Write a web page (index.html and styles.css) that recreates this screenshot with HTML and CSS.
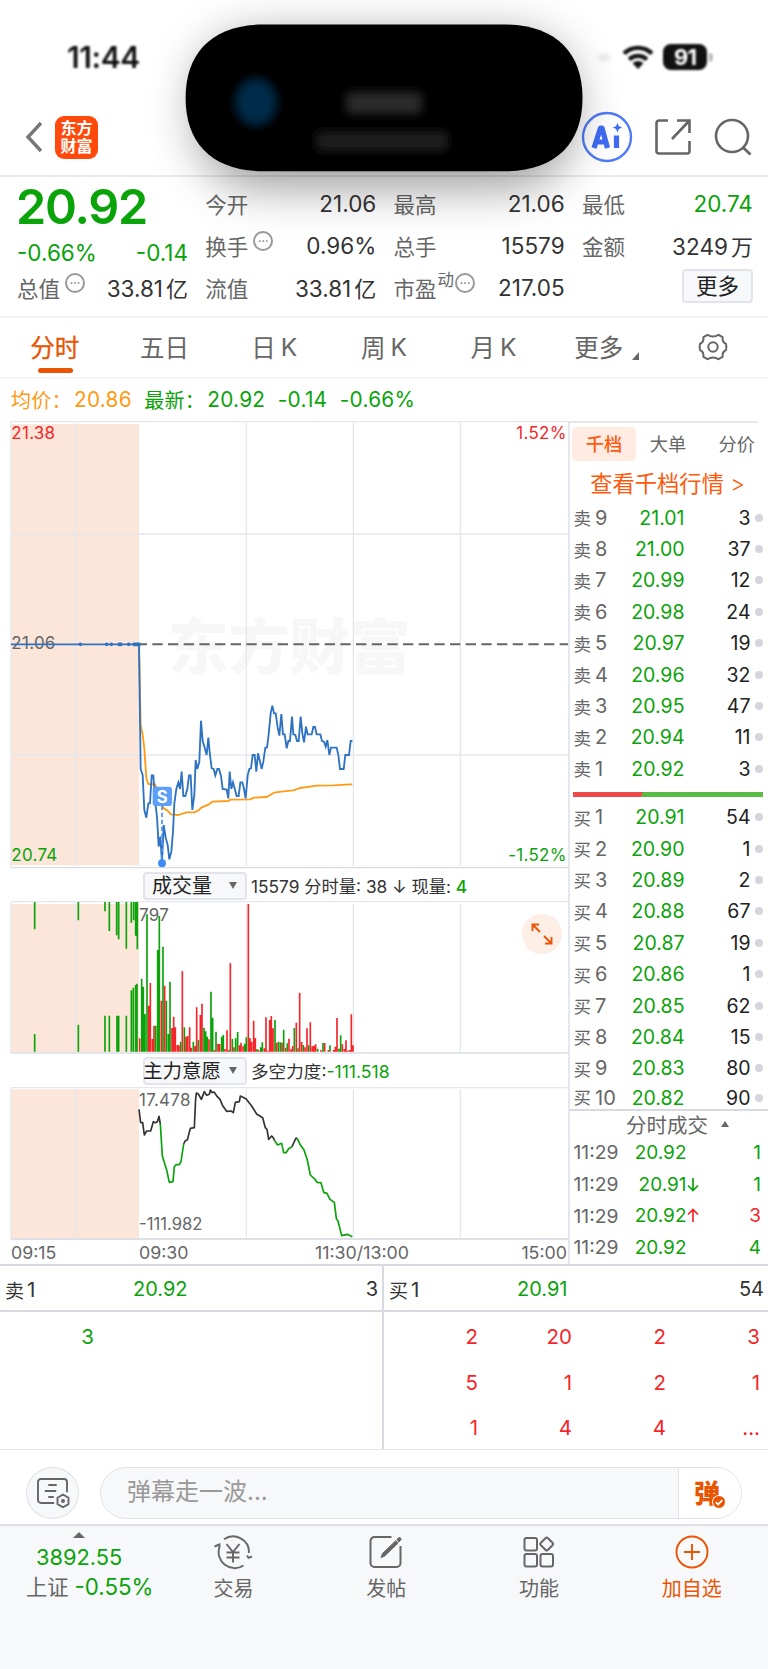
FILE: index.html
```html
<!DOCTYPE html>
<html lang="zh-CN">
<head>
<meta charset="utf-8">
<title>分时行情</title>
<link rel="stylesheet" href="styles.css">
</head>
<body>
<div class="phone">
  <header class="top">
    <div class="status">
      <span class="clock">11:44</span>
      <span class="status-icons">
        <i class="signal"></i>
        <svg class="wifi" width="32" height="25" viewBox="0 0 32 25"><g fill="none" stroke="#111" stroke-width="4.2"><path d="M2 8.6a20 20 0 0 1 28 0"/><path d="M7.2 14.4a12.6 12.6 0 0 1 17.6 0"/></g><path d="M10.6 18.2a7.6 7.6 0 0 1 10.8 0L16 24z" fill="#111"/></svg>
        <span class="battery">91</span><i class="tip"></i>
      </span>
    </div>
    <div class="nav">
      <svg class="back" width="20" height="32" viewBox="0 0 20 32"><path d="M17 2 4 16l13 14" fill="none" stroke="#777" stroke-width="3.400"/></svg>
      <span class="logo"><b>东方</b><b>财富</b></span>
      <span class="grow"></span>
      <svg class="ai" width="52" height="52" viewBox="0 0 52 52"><circle cx="26" cy="26" r="24" fill="#fff" stroke="#4f7af7" stroke-width="2.4"/><g fill="none" stroke="#3f6cf3" stroke-width="5.2" stroke-linejoin="round"><path d="M13 37 19.500 17h1.500L26.500 37M15 31h11"/><path d="M35.500 24.500V37"/></g><path d="M36.500 12l1.400 3.200 3.300 1.400-3.300 1.500-1.400 3.300-1.500-3.300-3.200-1.500 3.200-1.400z" fill="#3f6cf3"/></svg>
      <svg class="share" width="38" height="38" viewBox="0 0 38 38"><path d="M14 2.500H5a2.500 2.500 0 0 0-2.500 2.500v28A2.500 2.500 0 0 0 5 35.500h28a2.500 2.500 0 0 0 2.500-2.500V23M23 2.500h12.500V15M35 3 18 21" fill="none" stroke="#666" stroke-width="2.600"/></svg>
      <svg class="search" width="38" height="38" viewBox="0 0 38 38"><circle cx="18" cy="18" r="16" fill="none" stroke="#666" stroke-width="2.600"/><path d="m29 29.500 7.500 7" stroke="#666" stroke-width="2.800"/></svg>
    </div>
    <svg class="island" width="768" height="300" viewBox="0 0 768 300">
      <defs>
        <filter id="shade" x="-40%" y="-60%" width="180%" height="240%"><feGaussianBlur stdDeviation="24"/></filter>
        <filter id="soft" x="-60%" y="-60%" width="220%" height="220%"><feGaussianBlur stdDeviation="5"/></filter>
      </defs>
      <path class="halo" d="M264 36H506C556 36 574 66 574 108S556 187 506 187H264C214 187 196 150 196 108S214 36 264 36Z" filter="url(#shade)"/>
      <path d="M264 24.500H504C555 24.500 582.500 52 582.500 98S555 171.300 504 171.300H264C213 171.300 185.600 144 185.600 98S213 24.500 264 24.500Z"/>
      <g filter="url(#soft)"><ellipse cx="256" cy="102" rx="21" ry="24" fill="#00294a"/><rect x="346" y="92" width="76" height="22" rx="5" fill="#2a2a2a"/><rect x="316" y="131" width="132" height="20" rx="5" fill="#1c1c1c"/></g>
    </svg>
  </header>

  <section class="quote">
    <div class="col main">
      <strong class="price g">20.92</strong>
      <div class="kv sub g"><span>-0.66%</span><span>-0.14</span></div>
      <div class="kv"><label>总值<i class="more">•••</i></label><span>33.81<em>亿</em></span></div>
    </div>
    <div class="col">
      <div class="kv"><label>今开</label><span>21.06</span></div>
      <div class="kv"><label>换手<i class="more">•••</i></label><span>0.96%</span></div>
      <div class="kv"><label>流值</label><span>33.81<em>亿</em></span></div>
    </div>
    <div class="col">
      <div class="kv"><label>最高</label><span>21.06</span></div>
      <div class="kv"><label>总手</label><span>15579</span></div>
      <div class="kv"><label>市盈<sup>动</sup><i class="more tight">•••</i></label><span>217.05</span></div>
    </div>
    <div class="col">
      <div class="kv"><label>最低</label><span class="g">20.74</span></div>
      <div class="kv"><label>金额</label><span>3249<em>万</em></span></div>
      <div class="kv end"><button class="more-btn">更多</button></div>
    </div>
  </section>

  <nav class="periods">
    <span class="on">分时</span><span>五日</span><span>日<u>K</u></span><span>周<u>K</u></span><span>月<u>K</u></span>
    <span class="drop">更多<svg width="7" height="8" viewBox="0 0 7 8"><path d="M7 0v8H0z" fill="#666"/></svg></span>
    <span><svg width="30" height="28" viewBox="0 0 30 28"><path d="M9.500 1.800Q12 3.600 15 3.600T20.500 1.800L24.600 4.200Q24 9.200 28 11Q28.800 14 28 17Q24 18.800 24.600 23.800L20.500 26.200Q18 24.400 15 24.400T9.500 26.200L5.400 23.800Q6 18.800 2 17Q1.200 14 2 11Q6 9.200 5.400 4.200Z" fill="none" stroke="#666" stroke-width="2" stroke-linejoin="round"/><circle cx="15" cy="14" r="4.700" fill="none" stroke="#666" stroke-width="2"/></svg></span>
  </nav>

  <div class="latest"><span class="o name">均价：</span><span class="o n1">20.86</span><span class="g name">最新：</span><span class="g n2">20.92</span><span class="g n3">-0.14</span><span class="g">-0.66%</span></div>

  <main class="board">
    <section class="charts">
      <svg class="plot" width="568" height="454" viewBox="0 3 1704 1362">
        <rect x="33" y="27" width="384" height="1324" fill="#fce5d9"/>
        <text class="mark" x="504" y="762">东方财富</text>
        <g stroke="#e4e7ed" stroke-width="4" fill="none"><path d="M33 20H1704M33 18V1358M33 357H1704M33 1020H1704M225 24V1354M739 24V1354M1060 24V1354M1381 24V1354"/><path d="M33 1358H1704" stroke="#d9dce3"/></g>
        <text class="tick r" x="34" y="71">21.38</text><text class="tick r" x="1700" y="71" text-anchor="end">1.52%</text>
        <text class="tick" x="34" y="703">21.06</text>
        <text class="tick g" x="34" y="1337">20.74</text><text class="tick g" x="1700" y="1337" text-anchor="end">-1.52%</text>
        <path d="M417 688H1704" stroke="#666" stroke-width="6" stroke-dasharray="31 16" stroke-dashoffset="7"/>
        <polyline fill="none" stroke="#ff9a14" stroke-width="5.500" stroke-linejoin="round" points="417,688 422,930 428,960 433,1000 439,1090 445,1107 465,1108 471,1120 480,1150 491,1180 502,1186 513,1198 535,1200 560,1192 583,1192 597,1185 605,1177 627,1168 637,1160 685,1158 690,1154 750,1153 763,1148 800,1146 822,1133 850,1129 880,1126 900,1119 930,1115 950,1112 1000,1111 1035,1109 1057,1108"/>
        <polyline fill="none" stroke="#2e72c2" stroke-width="5.500" stroke-linejoin="miter" points="33,688 417,688 422,1062 428,1080 433,1185 439,1208 445,1165 450,1165 455,1081 460,1081 466,1165 471,1205 476,1295 481,1265 486,1345 491,1230 497,1268 503,1290 508,1333 514,1310 519,1250 523,1165 529,1122 535,1102 540,1122 545,1070 550,1143 556,1143 562,1122 567,1081 572,1081 577,1185 583,1140 587,1035 592,1062 598,1040 603,917 608,978 614,998 620,1020 625,968 630,1020 635,1060 641,1062 646,1081 652,1062 657,1062 663,1083 668,1122 680,1124 685,1150 689,1070 694,1122 699,1102 705,1124 710,1143 716,1143 721,1102 727,1102 732,1122 737,1150 743,1081 748,1062 753,1060 758,1020 764,1020 769,1070 774,1015 780,1040 785,1062 790,1040 796,998 801,998 806,958 812,895 817,872 822,895 827,895 833,938 838,962 844,897 849,958 854,958 860,1000 865,978 870,978 876,905 880,958 886,960 891,978 896,978 902,905 907,955 912,982 918,935 923,958 935,958 940,936 945,936 950,958 961,958 966,978 972,980 977,995 982,975 988,1020 993,998 1010,998 1015,1020 1020,1062 1031,1062 1036,1020 1047,1020 1052,978 1057,978"/>
        <path d="M241 688h.1M320 688h.1M334 688h.1M357 688h6M386 688h.1M402 688h16" stroke="#2e72c2" stroke-width="11" stroke-linecap="round"/>
        <path d="M486 1172V1335" stroke="#4a90f9" stroke-width="5" stroke-dasharray="13 8"/>
        <circle cx="486" cy="1345" r="12" fill="#3f8cf8"/>
        <rect x="458" y="1115" width="58" height="58" rx="10" fill="#5b9ffb"/><text class="sell" x="487" y="1163" text-anchor="middle">S</text>
      </svg>

      <div class="bar"><button class="pick wide">成交量<i></i></button><p><span>15579</span> 分时量: <span>38</span> ↓ 现量: <b class="g">4</b></p></div>

      <div class="vol">
        <svg class="plot" width="568" height="154" viewBox="0 123 1704 462">
          <rect x="33" y="132" width="384" height="444" fill="#fce5d9"/>
          <g stroke="#e4e7ed" stroke-width="4" fill="none"><path d="M33 125H1704M33 125V579M225 132V576M739 132V576M1060 132V576M1381 132V576"/><path d="M33 579H1704" stroke="#d9dce3"/></g>
          <text class="tick" x="417" y="182">797</text>
          <path stroke="#0aa30a" stroke-width="5" d="M104 126V208M235 126V181M315 126V154M328 126V213M350 126V226M356 126V238M379 126V266M394 126V188M401 126V181M407 126V227M412 126V268M104 575V522M235 575V494M315 575V467M328 575V467M351 575V467M356 575V467M379 575V467M394 575V391M400 575V383M407 575V375M411 575V371M425 575V356M430 575V380M435 575V462M441 575V163M467 575V497M473 575V270M478 575V168M489 575V260M499 575V422M505 575V522M510 575V365M542 575V545M553 575V502M580 575V545M595 575V539M612 575V503M617 575V514M622 575V530M633 575V395M638 575V473M648 575V515M665 575V530M670 575V525M686 575V570M697 575V537M707 575V535M713 575V516M734 575V551M739 575V532M771 575V567M782 575V562M787 575V547M825 575V480M835 575V545M841 575V547M851 575V509M862 575V550M883 575V504M894 575V565M910 575V555M926 575V556M953 575V566M969 575V549M990 575V556M1017 575V566M1022 575V526"/>
          <path stroke="#f5262a" stroke-width="5" d="M419 575V535M446 575V437M451 575V369M457 575V537M462 575V497M484 575V422M494 575V377M516 575V504M521 575V470M526 575V502M532 575V555M537 575V556M547 575V334M558 575V530M563 575V528M569 575V502M574 575V563M585 575V558M590 575V442M601 575V465M606 575V431M627 575V538M643 575V570M654 575V551M659 575V552M675 575V567M681 575V511M691 575V310M702 575V562M718 575V556M723 575V548M729 575V559M745 575V132M750 575V535M755 575V545M761 575V482M766 575V534M776 575V570M793 575V565M798 575V472M803 575V572M809 575V480M814 575V468M819 575V505M830 575V548M846 575V548M857 575V563M867 575V536M873 575V568M878 575V558M889 575V488M899 575V398M905 575V546M915 575V562M921 575V505M931 575V487M937 575V559M942 575V557M947 575V553M963 575V570M974 575V549M985 575V570M1001 575V570M1006 575V560M1011 575V474M1027 575V553M1033 575V567M1038 575V541M1043 575V572M1049 575V570M1054 575V463M1059 575V556"/>
        </svg>
        <svg class="expand" width="40" height="40" viewBox="0 0 40 40"><circle cx="20" cy="20" r="20" fill="#fdeee6"/><path d="M18 18l-7-7M10.500 17v-6.500H17M22 22l7 7M29.500 23v6.500H23" fill="none" stroke="#ea5504" stroke-width="1.900"/></svg>
      </div>

      <div class="bar second"><button class="pick">主力意愿<i></i></button><p>多空力度:<span class="g">-111.518</span></p></div>

      <svg class="plot" width="568" height="154" viewBox="0 678 1704 462">
        <rect x="33" y="688" width="384" height="446" fill="#fce5d9"/>
        <g stroke="#e4e7ed" stroke-width="4" fill="none"><path d="M33 683H1704M33 683V1137M225 688V1132M739 688V1132M1060 688V1132M1381 688V1132"/><path d="M33 1137H1704" stroke="#d3d6dc"/></g>
        <text class="tick" x="417" y="738">17.478</text><text class="tick low" x="417" y="1110">-111.982</text>
        <g fill="none" stroke-width="5" stroke-linejoin="round">
          <path stroke="#333" d="M417 748L422 788L428 788L433 825L440 813L452 813L460 785L466 788L472 785L477 769L481 792M551 852L556 842L562 840L571 805L583 803L587 715L589 699L595 702L604 718L613 695L620 706L628 703L631 690L636 698L642 696L652 710L660 718L668 737L680 754L693 753L700 758L706 727L718 725L721 708L738 716L755 738L770 762L788 773L796 803L801 808L806 838L815 828L819 832L824 842M876 860L888 834L892 836"/>
          <path stroke="#0aa30a" d="M481 792L487 888L500 930L508 967L519 965L523 920L528 914L538 914L543 905L551 852M824 842L833 855L845 850L851 878L858 878L866 866L876 860M892 836L900 853L912 870L922 900L931 945L945 958L951 967L963 968L971 997L981 1000L990 1018L1003 1027L1009 1075L1014 1083L1025 1127L1042 1123L1057 1130"/>
        </g>
      </svg>
      <div class="times"><span>09:15</span><span>09:30</span><span>11:30/13:00</span><span>15:00</span></div>
    </section>

    <aside class="book">
      <div class="tabs"><span class="on">千档</span><span>大单</span><span>分价</span></div>
      <a class="link">查看千档行情 <span>&gt;</span></a>
      <ul class="levels">
        <li><label>卖<b>9</b></label><span>21.01</span><em>3</em><i></i></li>
        <li><label>卖<b>8</b></label><span>21.00</span><em>37</em><i></i></li>
        <li><label>卖<b>7</b></label><span>20.99</span><em>12</em><i></i></li>
        <li><label>卖<b>6</b></label><span>20.98</span><em>24</em><i></i></li>
        <li><label>卖<b>5</b></label><span>20.97</span><em>19</em><i></i></li>
        <li><label>卖<b>4</b></label><span>20.96</span><em>32</em><i></i></li>
        <li><label>卖<b>3</b></label><span>20.95</span><em>47</em><i></i></li>
        <li><label>卖<b>2</b></label><span>20.94</span><em>11</em><i></i></li>
        <li><label>卖<b>1</b></label><span>20.92</span><em>3</em><i></i></li>
      </ul>
      <div class="ratio"></div>
      <ul class="levels buy">
        <li><label>买<b>1</b></label><span>20.91</span><em>54</em><i></i></li>
        <li><label>买<b>2</b></label><span>20.90</span><em>1</em><i></i></li>
        <li><label>买<b>3</b></label><span>20.89</span><em>2</em><i></i></li>
        <li><label>买<b>4</b></label><span>20.88</span><em>67</em><i></i></li>
        <li><label>买<b>5</b></label><span>20.87</span><em>19</em><i></i></li>
        <li><label>买<b>6</b></label><span>20.86</span><em>1</em><i></i></li>
        <li><label>买<b>7</b></label><span>20.85</span><em>62</em><i></i></li>
        <li><label>买<b>8</b></label><span>20.84</span><em>15</em><i></i></li>
        <li><label>买<b>9</b></label><span>20.83</span><em>80</em><i></i></li>
        <li><label>买<b>10</b></label><span>20.82</span><em>90</em><i></i></li>
      </ul>
      <div class="trades-head">分时成交<i></i></div>
      <ul class="trades">
        <li><time>11:29</time><span>20.92</span><i></i><em class="g">1</em></li>
        <li><time>11:29</time><span>20.91</span><i><svg width="12" height="15" viewBox="0 0 12 15"><path d="M6 1v12.500M1 8.500l5 5 5-5" fill="none" stroke="#0aa30a" stroke-width="1.700"/></svg></i><em class="g">1</em></li>
        <li><time>11:29</time><span>20.92</span><i><svg width="12" height="15" viewBox="0 0 12 15"><path d="M6 14V1.500M1 6.500l5-5 5 5" fill="none" stroke="#f5262a" stroke-width="1.700"/></svg></i><em class="r">3</em></li>
        <li><time>11:29</time><span>20.92</span><i></i><em class="g">4</em></li>
      </ul>
    </aside>
  </main>

  <section class="queue">
    <div class="side">
      <div class="q-head"><label>卖<b>1</b></label><span class="g">20.92</span><em>3</em></div>
      <div class="q-grid g"><span>3</span></div>
    </div>
    <div class="side">
      <div class="q-head"><label>买<b>1</b></label><span class="g">20.91</span><em>54</em></div>
      <div class="q-grid r"><span>2</span><span>20</span><span>2</span><span>3</span><span>5</span><span>1</span><span>2</span><span>1</span><span>1</span><span>4</span><span>4</span><span>...</span></div>
    </div>
  </section>

  <section class="chat">
    <span class="round"><svg width="34" height="32" viewBox="0 0 34 32"><g fill="none" stroke="#666" stroke-width="1.900" stroke-linecap="round" stroke-linejoin="round"><path d="M17.500 26H5a3 3 0 0 1-3-3V5a3 3 0 0 1 3-3h23a3 3 0 0 1 3 3v9.500"/><path d="M13 8h7M9.500 14h10M13 20h4"/><path d="M27 17.500l5.500 3.200v6.400L27 30.300l-5.500-3.200v-6.400z"/></g><circle cx="27" cy="23.900" r="2" fill="#666"/></svg></span>
    <div class="field"><span class="hint">弹幕走一波<u>...</u></span><span class="send"><b>弹</b><svg width="14" height="14" viewBox="0 0 14 14"><circle cx="7" cy="7" r="6.500" fill="#ea5504" stroke="#fff"/><path d="m3.800 7.200 2.300 2.300 4.200-4.400" fill="none" stroke="#fff" stroke-width="1.800"/></svg></span></div>
  </section>

  <footer class="tabbar">
    <div class="index"><i></i><span class="g">3892.55</span><p>上证 <b class="g">-0.55%</b></p></div>
    <div class="item"><svg width="40" height="36" viewBox="0 0 40 36"><g fill="none" stroke="#666" stroke-width="1.900"><path d="M11 5.200A16 16 0 0 1 36 19M1.500 12.500l5-2v2.500A16 16 0 0 0 30.500 31.500"/><path d="M34 21.500l1.500 2.300 3.500-1.300"/><path d="M13.500 10l6.500 8 6.500-8M20 18v10.500M13.500 18.500h13M13.500 23.500h13"/></g></svg><span>交易</span></div>
    <div class="item"><svg width="36" height="36" viewBox="0 0 36 36"><path d="M23.500 3H6.500a4 4 0 0 0-4 4v22a4 4 0 0 0 4 4h22a4 4 0 0 0 4-4V12" fill="none" stroke="#666" stroke-width="2"/><path d="M13 23.500l1.500-4L27.800 6.700l2.300 2.300L16.700 22z M29 5.500l1.500-1.700q1.500-.8 2.300.5t-.4 2L31 8z" fill="#666" stroke="#666"/></svg><span>发帖</span></div>
    <div class="item"><svg width="34" height="36" viewBox="0 0 34 36"><g fill="none" stroke="#666" stroke-width="2"><rect x="2.500" y="4" width="12.500" height="12.500" rx="2"/><rect x="2.500" y="20" width="12.500" height="12.500" rx="2"/><rect x="18.500" y="20" width="12.500" height="12.500" rx="2"/><rect x="19.700" y="5" width="10" height="10" rx="1.500" transform="rotate(45 24.700 10)"/></g></svg><span>功能</span></div>
    <div class="item hot"><svg width="36" height="36" viewBox="0 0 36 36"><g fill="none" stroke="#ea5504" stroke-width="1.900"><circle cx="18" cy="18" r="15.500"/><path d="M18 10v16M10 18h16"/></g></svg><span>加自选</span></div>
  </footer>
</div>
</body>
</html>
```
FILE: styles.css
```css
* { box-sizing: border-box; margin: 0; padding: 0; }
body { background: #fff; color: #333; font-family: Inter, "Noto Sans CJK SC", sans-serif; }
i, em, u { font-style: normal; text-decoration: none; }
ul { list-style: none; }
svg { display: block; flex: none; }
button { font: inherit; color: #222; background: #f7f8fa; border: 2px solid #e2e4ea; border-radius: 4px; }
.g { color: #0aa30a; fill: #0aa30a; }
.r { color: #f5262a; fill: #f5262a; }
.o { color: #ff9a14; }
.phone { width: 768px; height: 1669px; overflow: hidden; display: flex; flex-direction: column; }

/* Status bar and navigation */
.top { position: relative; height: 177px; flex: none; border-bottom: 2px solid #ebebed; }
.status { display: flex; justify-content: space-between; height: 112px; padding: 2px 55px 0 67px; align-items: center; color: #111; filter: blur(.9px); }
.clock { font-size: 30px; font-weight: 600; letter-spacing: -.4px; }
.status-icons { display: flex; align-items: center; }
.signal { width: 12px; height: 7px; border-radius: 4px; background: #e6e6e6; margin-right: 12px; filter: blur(2px); }
.wifi { margin-right: 9px; }
.battery { width: 44px; height: 26px; border-radius: 8px; background: #111; color: #fff; font-size: 22px; font-weight: 700; line-height: 26px; text-align: center; letter-spacing: -.8px; }
.tip { width: 4px; height: 9px; margin-left: 2px; border-radius: 0 4px 4px 0; background: #bbb; }
.nav { display: flex; align-items: center; height: 50px; padding: 0 16px 0 24px; }
.back { margin-right: 11px; }
.logo { width: 43px; height: 43px; border-radius: 9px; background: #ff4a0c; color: #fff; display: grid; align-content: center; justify-items: center; font-size: 16px; line-height: 18px; }
.logo b { font-weight: 700; }
.grow { flex: 1; }
.ai { margin-right: 21px; }
.share { margin-right: 22px; }
.island { position: absolute; left: 0; top: 0; pointer-events: none; z-index: 2; }
.halo { opacity: .4; }

/* Quote summary */
.quote { display: grid; grid-template-columns: repeat(4, 171px); column-gap: 17.300px; height: 141px; flex: none; padding: 5px 0 0 17px; border-bottom: 2px solid #f4f4f6; }
.kv { display: flex; justify-content: space-between; align-items: center; height: 42px; font-size: 22.500px; white-space: nowrap; }
.kv label { color: #666; font-size: 21.500px; display: flex; align-items: center; }
.kv em { font-size: 22px; margin-left: 3px; }
.kv .g { color: #0aa30a; }
.main { display: flex; flex-direction: column; }
.price { font-size: 48.500px; font-weight: 600; line-height: 50px; height: 54px; letter-spacing: -1.200px; margin-left: -1px; }
.sub { height: 30px; margin-top: 1px; margin-bottom: -1px; }
.main .kv:last-child { height: 42px; }
.more { width: 20px; height: 20px; border: 2px solid #999; border-radius: 50%; font-size: 6px; line-height: 15px; text-align: center; color: #888; margin: -9px 0 0 5px; letter-spacing: .2px; }
.more.tight { margin-left: 1px; }
sup { font-size: 16.500px; line-height: 16px; margin: -14px 0 0 1px; }
.end { justify-content: flex-end; }
.more-btn { width: 71px; height: 34px; font-size: 21.500px; line-height: 30px; margin-top: -2px; }

/* Period tabs */
.periods { display: grid; grid-template-columns: repeat(7, 109.700px); height: 61px; flex: none; border-bottom: 2px solid #f4f4f6; font-size: 24.500px; color: #666; }
.periods span { display: flex; justify-content: center; align-items: center; padding-bottom: 2px; }
.periods u { margin-left: 5px; }
.periods .on { color: #ea5504; position: relative; -webkit-text-stroke: .3px #ea5504; }
.periods .on::after { content: ""; position: absolute; left: 37.500px; top: 50px; width: 35px; height: 5px; border-radius: 3px; background: #ea5504; }
.periods .drop { padding-left: 7px; }
.periods .drop svg { margin: 18px 0 0 9px; }

.latest { display: flex; align-items: center; height: 37px; flex: none; padding: 4px 0 0 11px; font-size: 20.800px; letter-spacing: .25px; }
.name { font-size: 20px; width: 63px; white-space: nowrap; }
.n1, .n2, .n3 { margin-right: 12.500px; }

/* Charts */
.board { display: flex; height: 850px; flex: none; border-bottom: 2px solid #d8dae2; }
.charts { width: 568px; }
.plot text { font-family: Inter, "Noto Sans CJK SC", sans-serif; }
.tick { font-size: 51px; fill: #666; letter-spacing: .8px; }
.tick.low { font-size: 50px; letter-spacing: 0; }
.tick.r { fill: #f5262a; }
.tick.g { fill: #0aa30a; }
.plot .mark { font-size: 182px; font-weight: 900; fill: #f7f7f7; }
.sell { font-size: 50px; font-weight: 700; fill: #fff; }
.bar { display: flex; align-items: center; height: 31px; padding-left: 143px; font-size: 17.300px; }
.bar p { margin-left: 4px; white-space: nowrap; }
.bar b { font-weight: 500; }
.second p { font-size: 17.600px; }
.pick { display: flex; align-items: center; justify-content: space-between; width: 104px; height: 28px; padding: 0 8px 0 0; font-size: 19.500px; line-height: 24px; white-space: nowrap; }
.second .pick { text-indent: -2px; }
.pick.wide { padding-left: 7px; font-size: 20px; }
.pick i { border: 4px solid transparent; border-top: 7px solid #666; border-bottom: 0; }
.vol { position: relative; height: 154px; }
.expand { position: absolute; left: 522px; top: 13px; }
.times { display: grid; grid-template-columns: 128px 176px 1fr auto; padding: 0 1px 0 11px; height: 24px; align-items: center; font-size: 17.800px; color: #666; }

/* Order book */
.book { width: 200px; margin-top: 5px; border-left: 2px solid #e4e7ed; display: flex; flex-direction: column; }
.tabs { display: grid; grid-template-columns: 64px 64px 1fr; height: 40px; width: 188px; padding: 4px 3px 0 2px; border-top: 2px solid #e4e7ed; font-size: 18.200px; line-height: 34px; color: #666; text-align: center; }
.tabs span { height: 34px; }
.tabs .on { border-radius: 5px; background: #ffebe2; color: #ff5a0c; font-weight: 500; }
.tabs span:last-child { text-align: right; }
.link { height: 41px; line-height: 45px; padding-right: 3px; text-align: center; color: #ff5a0c; font-size: 22.300px; white-space: nowrap; }
.link span { font-weight: 300; }
.levels li { display: grid; grid-template-columns: 38px 73px 66px 12px; height: 31.400px; align-items: center; padding-left: 3.500px; font-size: 19.500px; }
.levels label { color: #666; font-size: 17.500px; white-space: nowrap; display: flex; align-items: center; }
.levels b { font-weight: 400; font-size: 20px; margin-left: 4px; }
.levels span { color: #0aa30a; text-align: right; }
.levels em { text-align: right; color: #222; }
.levels i { width: 8px; height: 8px; border-radius: 50%; background: #d3d6dd; margin-left: 4px; }
.ratio { height: 5px; margin: 7.500px 5px 4.500px 3px; flex: none; background: linear-gradient(110deg, #ec4a4a 0 36.500%, #5abb45 36.500%); }
.buy { height: 309px; flex: none; border-bottom: 2px solid #d8dae2; }
.buy li:last-child { height: 27px; line-height: 24px; }
.trades-head { display: flex; align-items: center; justify-content: center; gap: 13px; height: 26px; padding-left: 17px; font-size: 20.500px; color: #666; flex: none; }
.trades-head i { border: 4.500px solid transparent; border-bottom: 6px solid #666; border-top: 0; }
.trades li { display: grid; grid-template-columns: 48px 65px 14px 1fr; height: 31.700px; align-items: center; padding: 0 7px 0 3.500px; font-size: 19px; }
.trades time { color: #666; font-size: 19.300px; }
.trades span { color: #0aa30a; text-align: right; }
.trades em { text-align: right; }

/* Order queue */
.queue { display: grid; grid-template-columns: 384px 384px; height: 184px; flex: none; border-bottom: 1.500px solid #e3e5ea; }
.side { height: 183px; }
.side:first-child { border-right: 2px solid #d8dae2; }
.q-head { display: grid; grid-template-columns: 128px 1fr auto; align-items: center; height: 46px; padding: 2px 4px 0 5px; border-bottom: 2px solid #d8dae2; font-size: 20px; }
.q-head label { display: flex; align-items: center; font-size: 19px; }
.q-head b { font-weight: 400; font-size: 20.500px; margin-left: 3px; }
.q-grid { display: grid; grid-template-columns: repeat(4, 94px); grid-template-rows: 46.600px 46.600px 43px; align-items: center; padding-top: 1px; font-size: 20.500px; text-align: right; }

/* Comment field */
.chat { display: flex; gap: 21px; padding: 16.500px 26px 5px; height: 74px; flex: none; }
.round { width: 53px; height: 52px; border-radius: 50%; border: 1.500px solid #dfe1e7; background: #f7f8fa; display: grid; place-items: center; }
.field { display: flex; width: 642px; height: 52px; border: 1.500px solid #e0e2e8; border-radius: 26px; background: #f7f8fa; overflow: hidden; align-items: center; }
.hint { flex: 1; padding-left: 26px; font-size: 24px; line-height: 48px; color: #999; padding-bottom: 2px; }
.send { display: flex; align-items: center; width: 63px; height: 52px; border-left: 1.500px solid #dfe1e7; background: #fff; padding-left: 15px; color: #ea5504; font-size: 26px; }
.send b { font-weight: 900; margin-top: -3px; }
.send svg { margin: 19px 0 0 -8px; }

/* Bottom bar */
.tabbar { display: grid; grid-template-columns: 157px repeat(4, 152.800px); flex: 1; background: #f7f8fa; border-top: 2px solid #e0e1e4; color: #666; }
.item { display: flex; flex-direction: column; align-items: center; padding-top: 8px; font-size: 20px; }
.item span { line-height: 38px; }
.hot { color: #ea5504; }
.index { padding: 6px 0 0 26px; font-size: 21.800px; }
.index i { display: block; width: 12px; border: 6px solid transparent; border-bottom: 6px solid #666; border-top: 0; margin-left: 47px; }
.index span { display: block; margin-left: 10px; line-height: 39px; height: 36px; }
.index p { font-size: 21.300px; line-height: 26px; white-space: nowrap; }
.index b { font-weight: 400; font-size: 22.300px; }
```
